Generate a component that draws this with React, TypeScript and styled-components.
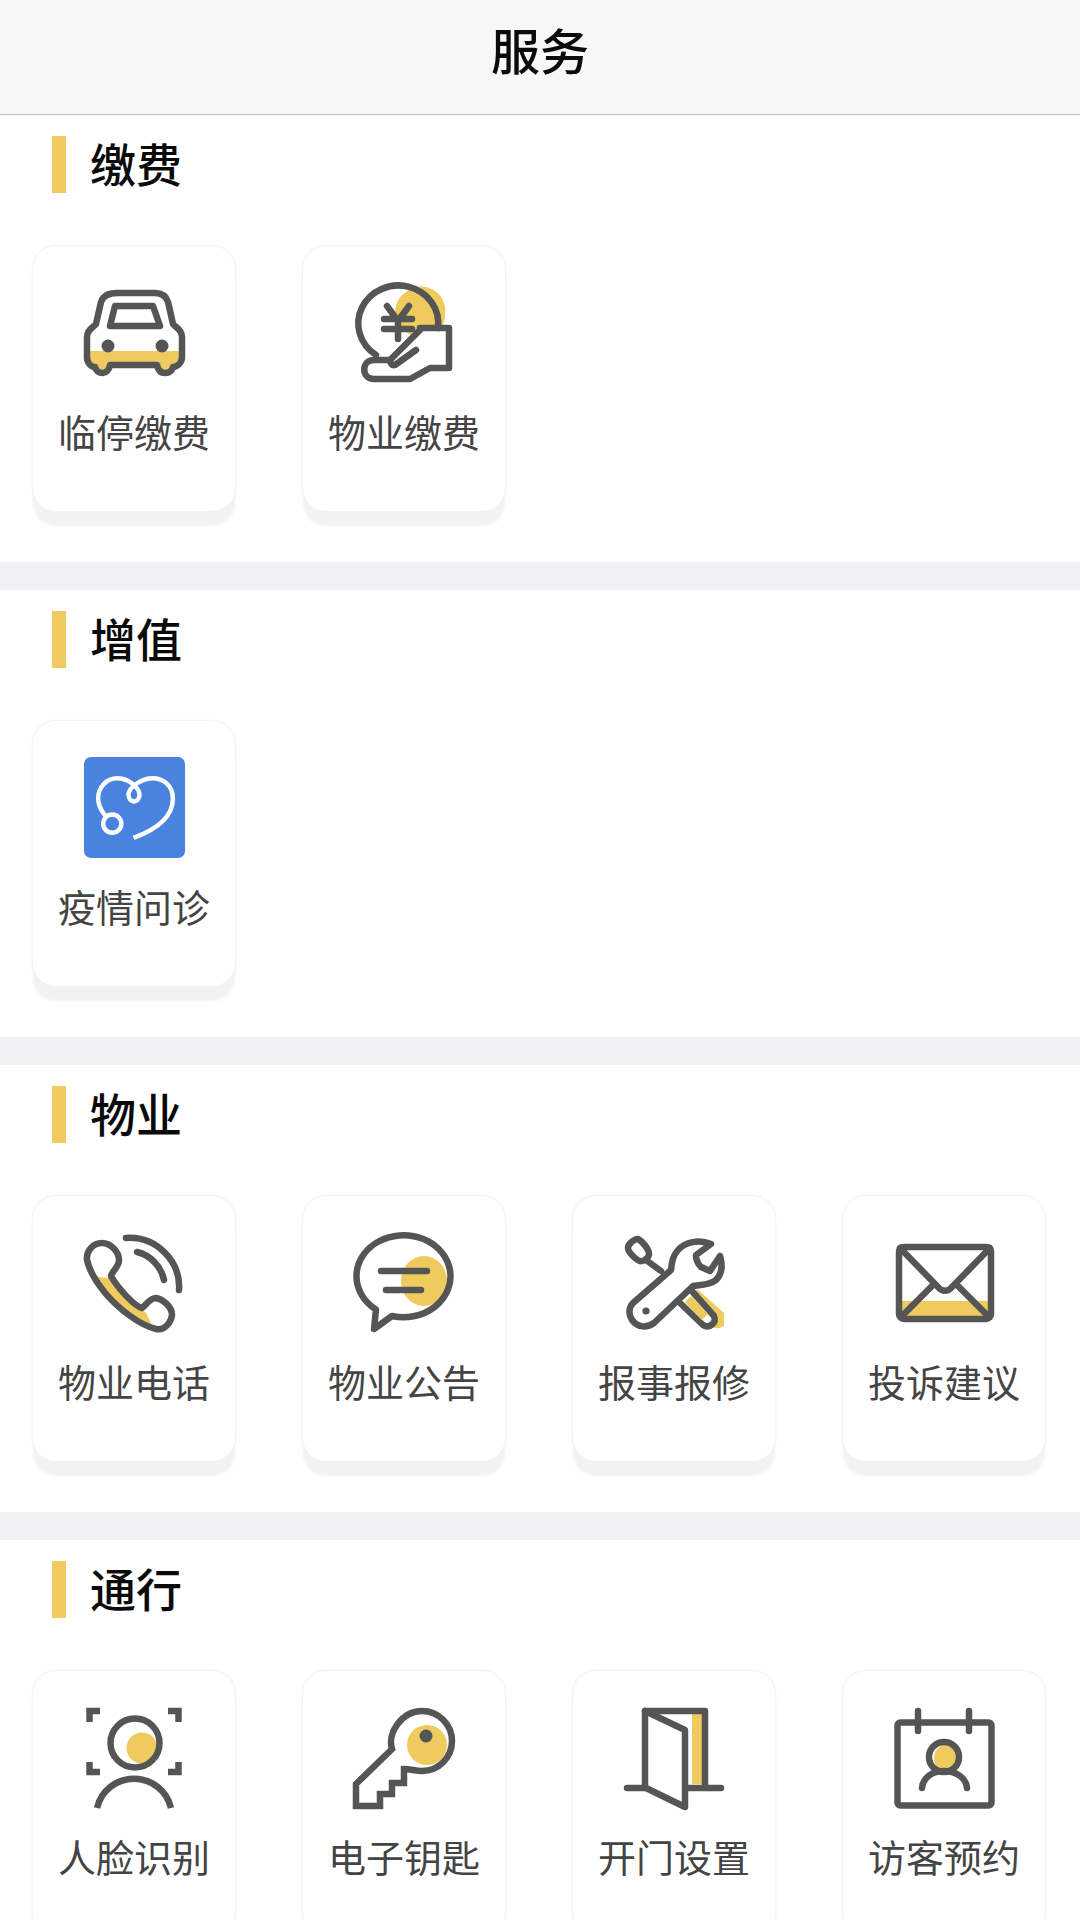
import React from "react";
import styled, { createGlobalStyle } from "styled-components";

const Y = "#EFCB5F";
const INK = "#555555";

const Global = createGlobalStyle`
  html, body { margin: 0; padding: 0; background: #fff; }
  * { box-sizing: border-box; }
  #root { width: 1080px; height: 1920px; overflow: hidden; }
`;

const Page = styled.div`
  width: 1080px;
  height: 1920px;
  overflow: hidden;
  background: #fff;
  font-family: "Noto Sans CJK SC", "Noto Sans", sans-serif;
`;

const Header = styled.header`
  height: 115px;
  background: #f7f7f7;
  border-bottom: 1px solid #bdbdbd;
  display: flex;
  align-items: center;
  justify-content: center;
  font-size: 49px;
  font-weight: 500;
  color: #0b0b0b;
  padding-bottom: 17px;
`;

const Section = styled.section`
  height: 475px;
  padding-top: 21px;
  border-bottom: 28px solid #f1f1f6;
`;

const TitleRow = styled.div`
  height: 57px;
  padding-left: 52px;
  display: flex;
  align-items: center;
  gap: 24px;
`;

const Bar = styled.i`
  display: block;
  width: 14px;
  height: 57px;
  background: ${Y};
`;

const Title = styled.h2`
  margin: 0;
  font-size: 46px;
  line-height: 53px;
  padding-bottom: 4px;
  font-weight: 500;
  color: #0a0a0a;
`;

const Grid = styled.div`
  margin-top: 52px;
  padding-left: 32px;
  display: grid;
  grid-template-columns: repeat(4, 204px);
  column-gap: 66px;
`;

const Card = styled.div`
  height: 267px;
  padding-top: 37px;
  background: #fff;
  border: 1px solid #f3f3f4;
  border-radius: 24px;
  display: flex;
  flex-direction: column;
  align-items: center;
  box-shadow: 0 15px 3px -1px #f2f2f4, 0 0 3px rgba(0, 0, 0, 0.03);
`;

const Icon = styled.svg.attrs({ viewBox: "0 0 100 100" })<{ $nudge?: number }>`
  display: block;
  width: 100px;
  height: 100px;
  flex: none;
  fill: none;
  overflow: visible;
  stroke: ${INK};
  stroke-width: 6.5;
  stroke-linecap: round;
  stroke-linejoin: round;
  margin-left: ${(p) => (p.$nudge ?? 0) * 2}px;
`;

const Label = styled.div`
  margin-top: 23px;
  font-size: 38px;
  line-height: 50px;
  color: #444;
  white-space: nowrap;
`;

const Car = () => (
  <Icon $nudge={1}>
    <path d="M3 68H97V76L88 85L80 89L72 81H25L18 89L10 85L3 76Z" fill={Y} stroke="none" />
    <path d="M32 10H70C77 10 81 13 83 19L88 41C90 44 97 46 97 54V74C97 80 92 84 88 84C87 88 84 90 80 90C76 90 73 87 72 82H25C24 87 21 90 18 90C14 90 11 88 10 84C6 84 2 80 2 74V54C2 46 9 44 11 41L16 19C18 13 24 10 32 10Z" />
    <path d="M30 23H68L75 43H25Z" />
    <circle cx="23" cy="63" r="6.5" fill={INK} stroke="none" />
    <circle cx="77" cy="63" r="6.5" fill={INK} stroke="none" />
  </Icon>
);

const Coin = () => (
  <Icon>
    <path d="M52 9A24 24 0 0 1 91 31C91 36 90 41 87 45H68L58 52A24 24 0 0 1 52 9Z" fill={Y} stroke="none" />
    <path d="M84 45A40 38 0 1 0 22 72" />
    <path d="M33 23L44 38L55 23M30 36H58M30 46H58M44 38V56" />
    <path d="M66 45H95V85H76L56 96H20C7 96 7 77 20 77H36L66 47" />
    <path d="M36 77C36 80 38 83 41 82L62 67" />
  </Icon>
);

const Stethoscope = styled.svg.attrs({ viewBox: "0 0 100 100" })`
  display: block;
  width: 101px;
  height: 101px;
  margin-top: -1px;
  flex: none;
  fill: none;
  stroke: #fff;
  stroke-width: 4.4;
  stroke-linecap: butt;
`;

const Heart = () => (
  <Stethoscope>
    <rect x="0" y="0" width="100" height="100" rx="7" fill="#4A82E0" stroke="none" />
    <path d="M49 80C71 72 88 60 88 41C88 28 78 21 68 21C58 21 45 29 44 37C44 42 47 44 49.500 44C52 44 55 42 55 37C54 29 43 21 33 21C22 21 14 30 14 41C14 48 17 53 21 58" />
    <circle cx="28" cy="66" r="9" />
  </Stethoscope>
);

const Phone = () => (
  <Icon>
    <path d="M10 42C18 46 25 44 27 45L58 76L62 80L70 96C50 92 25 70 10 42Z" fill={Y} stroke="none" />
    <path d="M18 10C9 10 2 18 3 27C5 36 12 49 22 61C34 75 55 92 72 96C80 98 87 90 88 82C88 73 78 66 72 65C66 65 62 72 58 75C50 73 33 54 27 43C28 38 35 34 35 27C35 19 27 10 18 10Z" />
    <path d="M42 5C72 3 97 28 95 57" />
    <path d="M53 19C66 22 77 33 80 47" />
  </Icon>
);

const Chat = () => (
  <Icon>
    <ellipse cx="70" cy="48" rx="23" ry="25" fill={Y} stroke="none" />
    <path d="M38 83A47 41 0 1 0 22 76.500L20 96Z" />
    <path d="M27 38H73M32 57H67" />
  </Icon>
);

const Tools = () => (
  <Icon $nudge={1}>
    <path d="M72 56L99 80V92C97 96 90 96 86 93L66 70Z" fill={Y} stroke="none" />
    <path d="M21 27L36 38" />
    <path d="M3 15C3 11 9 6 13 6C17 8 24 16 24 21C24 25 18 29 15 28C11 27 3 19 3 15Z" />
    <path d="M55 70L78 92C84 96 92 90 89 83L66 57" fill="#fff" />
    <path d="M63 66L80 84" stroke={Y} strokeWidth="9" strokeLinecap="butt" />
    <path d="M8 70L46 37C47 30 47 24 53 17C60 9 74 6 86 11L71 22C71 27 73 31 76 34L85 38L95 23C98 33 97 41 91 47C85 52 76 52 68 53L29 90C22 95 13 95 7 87C3 81 4 74 8 70Z" fill="#fff" />
    <circle cx="21" cy="78" r="3.600" fill={INK} stroke="none" />
  </Icon>
);

const Mail = () => (
  <Icon $nudge={2}>
    <rect x="6" y="68" width="86" height="15" fill={Y} stroke="none" />
    <path d="M36 53L6 83M62 53L92 83" />
    <rect x="3" y="14" width="92" height="72" rx="5" />
    <path d="M4 15L42 54C46 59 52 59 56 54L94 15" />
  </Icon>
);

const Face = () => (
  <Icon>
    <circle cx="58" cy="40" r="15.500" fill={Y} stroke="none" />
    <g strokeLinecap="butt" strokeLinejoin="miter">
      <path d="M16 3H5.500V14M84 3H94.500V14M5.500 54V64H16M94.500 54V64H84" />
      <circle cx="51" cy="35" r="24.500" />
      <path d="M13 100A38 38 0 0 1 87 100" />
    </g>
  </Icon>
);

const Key = () => (
  <Icon>
    <circle cx="73" cy="37" r="20" fill={Y} stroke="none" />
    <circle cx="72" cy="28" r="6.500" fill={INK} stroke="none" />
    <path
      strokeLinejoin="miter"
      strokeLinecap="butt"
      d="M38 41C33 25 48 3 68 3C85 3 98 17 98 33C98 49 85 63 68 63C62 63 56 61 50 61V75H38V86H26V98H2V76Z"
    />
  </Icon>
);

const Door = () => (
  <Icon>
    <rect x="68" y="6" width="10" height="70" fill={Y} stroke="none" />
    <path d="M81 78V3H21V79" />
    <path d="M3 80H21M62 80H97" />
    <path d="M21 3L61 22V99L22 80" />
  </Icon>
);

const Calendar = () => (
  <Icon $nudge={1}>
    <circle cx="53" cy="50" r="14" fill={Y} stroke="none" />
    <rect x="2.500" y="14.500" width="94" height="83" rx="3" />
    <path d="M23 3V23M74 3V23" />
    <circle cx="49" cy="49" r="15" />
    <path d="M27 80C28 69 38 63 49 63C60 63 71 69 72 80" />
  </Icon>
);

const sections = [
  { title: "缴费", items: [["临停缴费", Car], ["物业缴费", Coin]] },
  { title: "增值", items: [["疫情问诊", Heart]] },
  {
    title: "物业",
    items: [["物业电话", Phone], ["物业公告", Chat], ["报事报修", Tools], ["投诉建议", Mail]],
  },
  {
    title: "通行",
    items: [["人脸识别", Face], ["电子钥匙", Key], ["开门设置", Door], ["访客预约", Calendar]],
  },
] as { title: string; items: [string, React.FC][] }[];

export default function App() {
  return (
    <Page>
      <Global />
      <Header>服务</Header>
      {sections.map((s) => (
        <Section key={s.title}>
          <TitleRow>
            <Bar />
            <Title>{s.title}</Title>
          </TitleRow>
          <Grid>
            {s.items.map(([label, Glyph]) => (
              <Card key={label}>
                <Glyph />
                <Label>{label}</Label>
              </Card>
            ))}
          </Grid>
        </Section>
      ))}
    </Page>
  );
}
